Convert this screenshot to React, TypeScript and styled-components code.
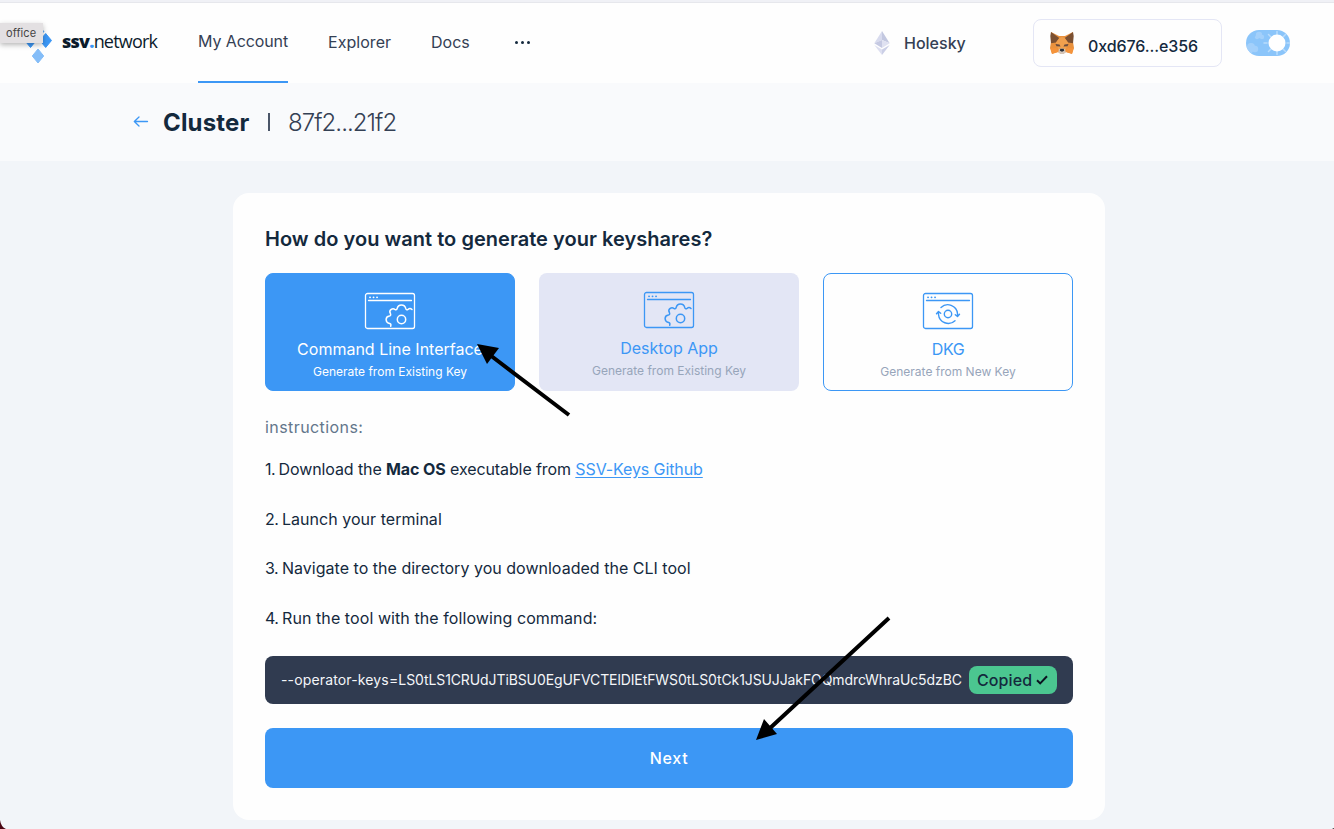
import React from "react";
import styled, { createGlobalStyle } from "styled-components";

const blue = "#3c97f5";
const ink = "#14293d";
const slate = "#344054";

const GlobalStyle = createGlobalStyle`
  * { box-sizing: border-box; }
  body { margin: 0; background: #f2f5f9; font-family: Inter, "Liberation Sans", sans-serif; color: ${ink}; }
`;

const Page = styled.div`
  position: relative;
  width: 1334px;
  height: 829px;
  overflow: hidden;
  background: #f2f5f9;
`;

const Header = styled.header`
  display: flex;
  height: 83px;
  padding-left: 25px;
  background: #fefefe;
  border-top: 2px solid #f0f1f6;
  box-shadow: inset 0 1px 0 #e6e7ec;
`;

const Logo = styled.div`
  display: flex;
  align-items: center;
  width: 173px;
`;

const Wordmark = styled.span`
  margin-left: 10px;
  padding-bottom: 4px;
  font-family: "Open Sans", sans-serif;
  font-size: 18px;
  letter-spacing: -0.8px;
  color: #0b1b2b;
  white-space: nowrap;
  b { font-weight: 800; }
  i { font-style: normal; font-weight: 800; color: ${blue}; }
`;

const Nav = styled.nav`
  display: flex;
  gap: 40px;
`;

const NavItem = styled.a<{ $active?: boolean; $width: number; $spacing: number }>`
  width: ${(p) => p.$width}px;
  height: 81px;
  padding-top: ${(p) => (p.$active ? 28 : 29)}px;
  border-bottom: ${(p) => (p.$active ? `2px solid ${blue}` : "0")};
  font-size: 16px;
  line-height: 22px;
  letter-spacing: ${(p) => p.$spacing}px;
  color: ${slate};
  white-space: nowrap;
`;

const More = styled.div`
  display: flex;
  gap: 3px;
  margin: 39px 0 0 5px;
  height: 3px;
  i { width: 3px; height: 3px; border-radius: 50%; background: #14293d; }
`;

const Network = styled.div`
  display: flex;
  align-items: center;
  gap: 14px;
  margin-left: auto;
  width: 159px;
  font-size: 16px;
  font-weight: 500;
  letter-spacing: 0;
  color: ${slate};
`;

const Wallet = styled.button`
  display: flex;
  align-items: center;
  gap: 14px;
  width: 189px;
  height: 48px;
  margin: 17px 24px 0 0;
  padding: 0 0 0 16px;
  border: 1px solid #e4e6f5;
  border-radius: 8px;
  background: #fefefe;
  color: ${ink};
  font: 500 16px Inter, sans-serif;
  letter-spacing: -0.1px;
  span { padding-top: 5px; }
`;

const Toggle = styled.div`
  margin: 28px 44px 0 0;
  height: 26px;
`;

const Crumbs = styled.div`
  display: flex;
  align-items: center;
  height: 78px;
  padding-left: 133px;
  background: #f9fafc;
  font-size: 24px;
`;

const CrumbTitle = styled.h1`
  margin: 0 0 0 14px;
  width: 105px;
  font-size: 24px;
  font-weight: 700;
  letter-spacing: 0.15px;
`;

const CrumbBar = styled.i`
  width: 2px;
  height: 18px;
  background: #4a5568;
`;

const CrumbId = styled.span`
  margin-left: 18px;
  font-weight: 300;
  letter-spacing: -0.95px;
  color: ${slate};
`;

const Card = styled.main`
  width: 872px;
  height: 627px;
  margin: 32px 0 0 233px;
  padding: 32px;
  border-radius: 16px;
  background: #fefefe;
`;

const Title = styled.h2`
  margin: 0 0 20px;
  font-size: 20px;
  line-height: 28px;
  font-weight: 600;
  letter-spacing: 0.03px;
`;

const Options = styled.div`
  display: grid;
  grid-template-columns: 250px 260px 250px;
  gap: 24px;
`;

const tones = {
  filled: { bg: blue, border: blue, main: "#fff", sub: "#fff" },
  soft: { bg: "#e3e6f5", border: "transparent", main: blue, sub: "#97a5ba" },
  outline: { bg: "#fefefe", border: blue, main: blue, sub: "#97a5ba" },
};
type Tone = keyof typeof tones;

const Option = styled.div<{ $tone: Tone }>`
  display: flex;
  flex-direction: column;
  align-items: center;
  height: 118px;
  padding-top: ${(p) => (p.$tone === "soft" ? 17 : 18)}px;
  border: 1px solid ${(p) => tones[p.$tone].border};
  border-radius: 8px;
  background: ${(p) => tones[p.$tone].bg};
  background-clip: border-box;
  color: ${(p) => tones[p.$tone].main};
`;

const OptionName = styled.div<{ $spacing: number }>`
  margin-top: 7px;
  font-size: 16px;
  line-height: 24px;
  letter-spacing: ${(p) => p.$spacing}px;
`;

const OptionHint = styled.div<{ $tone: Tone }>`
  margin-top: 1px;
  font-size: 12px;
  line-height: 20px;
  letter-spacing: 0;
  color: ${(p) => tones[p.$tone].sub};
`;

const Label = styled.div`
  margin: 24px 0 18px;
  font-size: 16px;
  line-height: 24px;
  letter-spacing: 0.42px;
  color: #63768b;
`;

const Steps = styled.div`
  display: flex;
  flex-direction: column;
  gap: 25.7px;
`;

const Step = styled.div<{ $spacing: number }>`
  height: 24px;
  font-size: 16px;
  line-height: 24px;
  letter-spacing: ${(p) => p.$spacing}px;
  white-space: nowrap;
  b { font-weight: 700; }
  a { color: ${blue}; text-decoration: underline; text-underline-offset: 2px; }
`;

const StepNumber = styled.span`
  display: inline-block;
  width: ${(p: { $width: number }) => p.$width}px;
  letter-spacing: -0.5px;
`;

const Command = styled.div`
  display: flex;
  align-items: center;
  height: 48px;
  margin: 26px 0 24px;
  padding: 0 16px;
  border-radius: 8px;
  background: #303b50;
  color: #f4f6f9;
`;

const CommandText = styled.div`
  width: 681px;
  margin-right: 7px;
  overflow: hidden;
  white-space: nowrap;
  font-size: 14px;
  line-height: 22px;
  letter-spacing: -0.1px;
`;

const Flag = styled.span`
  letter-spacing: 0.15px;
`;

const Copied = styled.div`
  display: flex;
  align-items: center;
  gap: 4px;
  width: 88px;
  height: 28px;
  padding-left: 8px;
  border-radius: 8px;
  background: #4bc690;
  color: ${ink};
  font-size: 16px;
  font-weight: 500;
  letter-spacing: 0.1px;
`;

const Next = styled.button`
  display: block;
  width: 100%;
  height: 60px;
  border: 0;
  border-radius: 8px;
  background: ${blue};
  color: #fff;
  font: 500 16px Inter, sans-serif;
  letter-spacing: 0.7px;
`;

const Tooltip = styled.div`
  position: absolute;
  left: 0;
  top: 23px;
  width: 43px;
  height: 20px;
  padding-left: 6px;
  background: #e3e0e2;
  box-shadow: 0 2px 5px rgba(0, 0, 0, 0.28);
  color: #444;
  font-size: 11px;
  line-height: 20px;
  letter-spacing: 0.1px;
`;

const Annotations = styled.svg`
  position: absolute;
  left: 0;
  top: 0;
  pointer-events: none;
`;

const LogoMark = () => (
  <svg width="27" height="42" viewBox="0 0 27 42" overflow="visible">
    <g fill={blue} stroke={blue} strokeWidth="1" strokeLinejoin="round">
      <path d="M13 2.500l5.700 7-5.700 7-5.700-7zM5.500 11.500l5.700 7-5.700 7-5.700-7zM20.700 11.500l5.800 7-5.800 7-5.800-7z" />
      <path d="M13 27l5.700 7-5.700 7-5.700-7z" fill="#84bdf8" stroke="#84bdf8" />
    </g>
  </svg>
);

const EthMark = () => (
  <svg width="16" height="24" viewBox="0 0 16 24">
    <path d="M8 0L0.3 12.3 8 9z" fill="#d8dbee" />
    <path d="M8 0l7.7 12.3L8 9z" fill="#c3c8e0" />
    <path d="M8 9L.3 12.3 8 17z" fill="#c5c9e2" />
    <path d="M8 9l7.7 3.3L8 17z" fill="#dfe1f1" />
    <path d="M.3 14L8 18.5V24z" fill="#dddff0" />
    <path d="M15.7 14L8 18.5V24z" fill="#cbcfe6" />
  </svg>
);

const Fox = () => (
  <svg width="24" height="24" viewBox="0 0 24 24">
    <path d="M1 1l8 4h6l8-4v10l1 6-2 6-6-2-3 2h-2l-3-2-6 2-2-6 1-6z" fill="#e9913d" />
    <path d="M1 1l8.300 6L6 11.500l-5 .8L.3 5zM23 1l-8.300 6 3.300 4.500 5 .8.700-7.300z" fill="#7b5032" />
    <path d="M6 11.500L9.300 7 12 6l2.700 1L18 11.500l-2.500 8h-7z" fill="#f0a04e" />
    <path d="M5.500 13l4 .5 1 2-4-.2zM18.500 13l-4 .5-1 2 4-.2z" fill="#684b3e" />
    <path d="M.5 17l6 .3 2.500 3.500L2 22.800zM23.500 17l-6 .3-2.500 3.500 7 2z" fill="#f5933b" />
    <path d="M9 18.300l3-1 3 1 .8 3-2.300 1.700h-3L8.200 21.300z" fill="#d5c5b8" />
    <path d="M10.300 17.800h3.400l.5 2-2.200.9-2.200-.9z" fill="#2b3038" />
  </svg>
);

const ThemeSwitch = () => (
  <svg width="44" height="26" viewBox="0 0 44 26">
    <defs>
      <clipPath id="pill"><rect width="44" height="26" rx="13" /></clipPath>
    </defs>
    <g clipPath="url(#pill)">
      <rect width="44" height="26" fill="#8bc5fa" />
      <g fill="#a3d0fb">
        <circle cx="13" cy="5" r="3.200" /><circle cx="16" cy="7" r="2.200" /><circle cx="11" cy="7.200" r="2" />
        <circle cx="5" cy="17" r="4" /><circle cx="9" cy="19" r="3.200" /><circle cx="3" cy="20" r="4" />
      </g>
      <path d="M31 1.500v3M31 21.500v3M18 13h3M41 13h3M22.500 4.500l2 2M22.500 21.500l2-2M39.500 4.500l-2 2M39.500 21.500l-2-2" stroke="#b9dcfc" strokeWidth="1.500" strokeLinecap="round" />
      <circle cx="31" cy="13" r="8.500" fill="#fff" />
    </g>
  </svg>
);

const WindowIcon = ({ kind }: { kind: "gear" | "cycle" }) => (
  <svg width="52" height="38" viewBox="0 0 52 38" fill="none" stroke="currentColor" strokeWidth="1.300" strokeLinecap="round" strokeLinejoin="round">
    <rect x="1.500" y="1.500" width="49" height="35" rx="2" />
    <path d="M4.500 8.500h43" />
    <path d="M6 5.300h.1M9.500 5.300h.1M13 5.300h.1" strokeWidth="1.800" />
    {kind === "gear" ? (
      <g strokeWidth="1.500">
        <circle cx="37.500" cy="27.500" r="4.200" />
        <path d="M26.700 34.200c.5-1.500.2-2.300-1-2.700-2.300-.4-3.400-1.300-3.600-3.800 0-2.300 1-3.300 3.300-3.600 1.200-.3 1.600-1.300 1-2.600-1-1.600-.7-2.800.5-3.800 1.200-1 2.500-1.400 3.900-.3 1.200.8 2.100.3 2.400-1 .5-2.300 1.700-3.500 4.200-3.500s3.800 1 4.200 3.300c.3 1.400 1.200 1.900 2.500 1.100 1.200-.9 2.600-1 3.900.2" />
      </g>
    ) : (
      <g strokeWidth="1.400">
        <circle cx="26" cy="22" r="3.700" />
        <path d="M19 15.400a9.800 9.800 0 0 1 16.500 6.100v2.500M33.300 22.800l2.200 1.700 2-2.200M33 28.700a9.800 9.800 0 0 1-16.500-6.200V20M14.500 21.700l2-2.200 2.200 1.700" />
      </g>
    )}
  </svg>
);

const options: { name: string; hint: string; tone: Tone; icon: "gear" | "cycle"; spacing: number }[] = [
  { name: "Command Line Interface", hint: "Generate from Existing Key", tone: "filled", icon: "gear", spacing: 0 },
  { name: "Desktop App", hint: "Generate from Existing Key", tone: "soft", icon: "gear", spacing: 0 },
  { name: "DKG", hint: "Generate from New Key", tone: "outline", icon: "cycle", spacing: -0.4 },
];

export default function App() {
  return (
    <Page>
      <GlobalStyle />
      <Header>
        <Logo>
          <LogoMark />
          <Wordmark><b>ssv</b><i>.</i>network</Wordmark>
        </Logo>
        <Nav>
          <NavItem $active $width={90} $spacing={-0.1}>My Account</NavItem>
          <NavItem $width={63} $spacing={0.05}>Explorer</NavItem>
          <NavItem $width={39} $spacing={0}>Docs</NavItem>
          <More><i /><i /><i /></More>
        </Nav>
        <Network><EthMark />Holesky</Network>
        <Wallet><Fox /><span>0xd676...e356</span></Wallet>
        <Toggle><ThemeSwitch /></Toggle>
      </Header>
      <Crumbs>
        <svg width="16" height="14" viewBox="0 0 16 14" fill="none" stroke={blue} strokeWidth="1.300" strokeLinecap="round" strokeLinejoin="round">
          <path d="M14.500 6.500H1.500M6 2L1.300 6.500 6 11" />
        </svg>
        <CrumbTitle>Cluster</CrumbTitle>
        <CrumbBar />
        <CrumbId>87f2...21f2</CrumbId>
      </Crumbs>
      <Card>
        <Title>How do you want to generate your keyshares?</Title>
        <Options>
          {options.map((o) => (
            <Option key={o.name} $tone={o.tone}>
              <WindowIcon kind={o.icon} />
              <OptionName $spacing={o.spacing}>{o.name}</OptionName>
              <OptionHint $tone={o.tone}>{o.hint}</OptionHint>
            </Option>
          ))}
        </Options>
        <Label>instructions:</Label>
        <Steps>
          <Step $spacing={-0.1}><StepNumber $width={13.5}>1.</StepNumber>Download the <b>Mac OS</b> executable from <a>SSV-Keys Github</a></Step>
          <Step $spacing={0.03}><StepNumber $width={17}>2.</StepNumber>Launch your terminal</Step>
          <Step $spacing={0.02}><StepNumber $width={17}>3.</StepNumber>Navigate to the directory you downloaded the CLI tool</Step>
          <Step $spacing={0.08}><StepNumber $width={17}>4.</StepNumber>Run the tool with the following command:</Step>
        </Steps>
        <Command>
          <CommandText><Flag>--operator-keys=</Flag>LS0tLS1CRUdJTiBSU0EgUFVCTElDIEtFWS0tLS0tCk1JSUJJakFOQmdrcWhraUc5dzBCQ</CommandText>
          <Copied>
            Copied
            <svg width="12" height="10" viewBox="0 0 12 10" fill="none" stroke="#0b1320" strokeWidth="2">
              <path d="M1 5.200l3.200 3.200L11 1.300" />
            </svg>
          </Copied>
        </Command>
        <Next>Next</Next>
      </Card>
      <Tooltip>office</Tooltip>
      <Annotations width="1334" height="829" viewBox="0 0 1334 829">
        <path d="M490 355L569 415M768 730L889 618" stroke="#000" strokeWidth="4" />
        <path d="M477 344L499 348 487 364zM756 740L764 719 777 734z" fill="#000" />
        <path d="M0 820q1 7 6 9H0z" fill="#4a0714" />
        <path d="M1334 828v1h-2z" fill="#222" />
      </Annotations>
    </Page>
  );
}
